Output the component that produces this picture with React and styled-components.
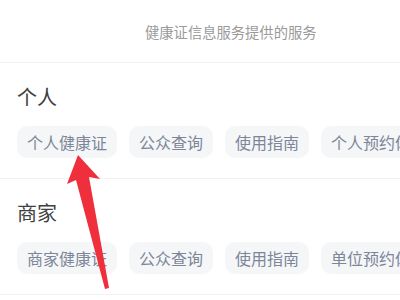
import React from "react";
import styled, { createGlobalStyle } from "styled-components";

const Global = createGlobalStyle`
  html, body { margin: 0; padding: 0; background: #fff; }
  body { font-family: "Noto Sans CJK SC", "Noto Sans", sans-serif; }
`;

const Page = styled.div`
  position: relative;
  width: 400px;
  height: 300px;
  overflow: hidden;
  background: #fff;
`;

const Header = styled.div`
  height: 62px;
  display: flex;
  align-items: center;
  padding-left: 145px;
  font-size: 14.3px;
  color: #9a9a9a;
  border-bottom: 1px solid #f2f2f2;
  white-space: nowrap;
`;

const Section = styled.section`
  padding: 20px 0 20px 17px;
  border-bottom: 1px solid #f2f2f2;
  display: flex;
  flex-direction: column;
  gap: 15px;
`;

const Title = styled.div`
  font-size: 20px;
  line-height: 28px;
  color: #404040;
`;

const Chips = styled.div`
  display: flex;
  gap: 12px;
  white-space: nowrap;
`;

const Chip = styled.div`
  flex: none;
  height: 32px;
  padding: 0 10px;
  display: flex;
  align-items: center;
  border-radius: 10px;
  background: #f5f6f8;
  color: #7d8698;
  font-size: 16px;
`;

const Arrow = styled.svg`
  position: absolute;
  left: 0;
  top: 0;
  pointer-events: none;
`;

const groups = [
  { title: "个人", items: ["个人健康证", "公众查询", "使用指南", "个人预约体检"] },
  { title: "商家", items: ["商家健康证", "公众查询", "使用指南", "单位预约体检"] },
];

export default function App() {
  return (
    <Page>
      <Global />
      <Header>健康证信息服务提供的服务</Header>
      {groups.map((g) => (
        <Section key={g.title}>
          <Title>{g.title}</Title>
          <Chips>
            {g.items.map((t) => (
              <Chip key={t}>{t}</Chip>
            ))}
          </Chips>
        </Section>
      ))}
      <Arrow width="400" height="300" viewBox="0 0 400 300">
        <polygon
          points="78,155 67,184 76,180 105,289 109,288 89,177 100,179"
          fill="#ef2f3c"
        />
      </Arrow>
    </Page>
  );
}
